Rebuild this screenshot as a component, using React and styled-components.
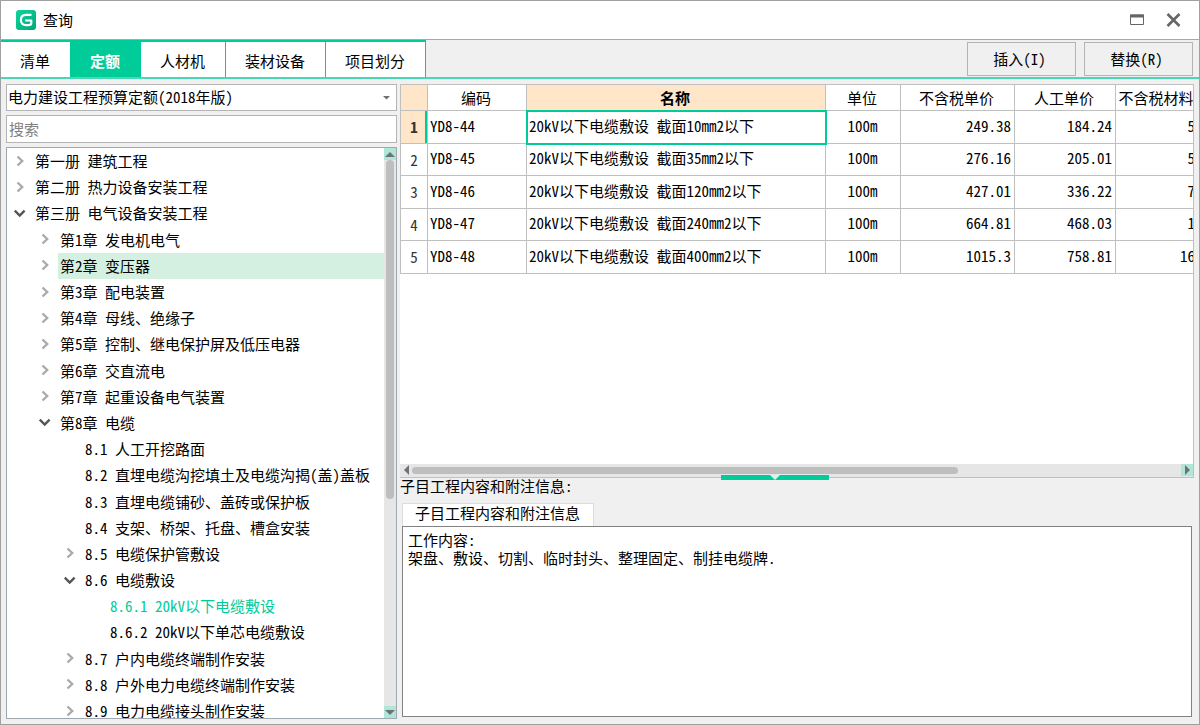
import React, { useState } from 'react';
import styled, { createGlobalStyle, css } from 'styled-components';

const green = '#00cc99';
const line = '#c0c0c0';
const peach = '#ffe6c8';
const font = '"Noto Sans Mono CJK SC", "Noto Sans CJK SC", "Liberation Sans", sans-serif';

const GlobalStyle = createGlobalStyle`
  * { box-sizing: border-box; }
  html, body, #root { height: 100%; }
  body {
    margin: 0;
    color: #000;
    font: 15px/18px ${font};
  }
  button, input, select, textarea {
    color: inherit;
    font: inherit;
    border-radius: 0;
  }
`;

const Window = styled.div`
  display: flex;
  flex-direction: column;
  height: 100%;
  min-height: 500px;
  background: #f0f0f0;
  border: 1px solid #a0a0a0;
  overflow: hidden;
`;

const TitleBar = styled.header`
  display: flex;
  align-items: center;
  gap: 7px;
  height: 39px;
  flex: none;
  padding: 0 18px 0 15px;
  background: #fff;
  border-bottom: 1px solid #a8a8a8;
`;

const Title = styled.h1`
  flex: 1;
  margin: 0;
  font-size: 15px;
  font-weight: 400;
`;

const WindowButton = styled.button`
  display: flex;
  padding: 0;
  margin-left: 15px;
  border: none;
  background: none;
`;

const Toolbar = styled.div`
  display: flex;
  align-items: center;
  justify-content: space-between;
  height: 39px;
  flex: none;
  padding-right: 6px;
  border-bottom: 2px solid #4bd7b4;
`;

const Tabs = styled.nav`
  display: flex;
  height: 37px;
`;

const Tab = styled.button`
  padding: 2px 20px 0 19px;
  border: solid ${green};
  border-width: 2px 1px 0 0;
  background: #fff;

  ${(props) =>
    props.$active &&
    css`
      background: ${green};
      color: #fff;
      font-weight: 700;
    `}
`;

const Actions = styled.div`
  display: flex;
  gap: 8px;
`;

const ActionButton = styled.button`
  width: 109px;
  height: 34px;
  padding: 0 4px 0 0;
  border: 1px solid #b4b4b4;
  background: #f0f0f0;
`;

const Body = styled.main`
  display: flex;
  flex: 1;
  gap: 3px;
  min-height: 0;
  padding: 5px;
`;

const Side = styled.section`
  display: flex;
  flex-direction: column;
  gap: 4px;
  width: 391px;
  flex: none;
`;

const SelectBox = styled.div`
  display: grid;
  align-items: center;
  height: 27px;
  border: 1px solid #b4b4b4;
  background: #fff;

  > * { grid-area: 1 / 1; }
  > svg { justify-self: end; margin-right: 6px; pointer-events: none; }
`;

const Select = styled.select`
  width: 100%;
  height: 25px;
  padding: 0 2px 2px 1px;
  border: none;
  appearance: none;
  background: none;
`;

const Search = styled.input`
  height: 28px;
  padding: 0 2px 2px;
  border: 1px solid #b4b4b4;
  background: #fff;

  &::placeholder { color: #808080; opacity: 1; }
`;

const TreeBox = styled.div`
  display: flex;
  flex: 1;
  min-height: 0;
  border: 1px solid #a0a8b0;
  background: #fff;
  overflow: hidden;
`;

const Tree = styled.ul`
  display: flex;
  flex-direction: column;
  flex: 1;
  height: calc(100% + 6px);
  margin: 0;
  padding: 0;
  list-style: none;
`;

const Node = styled.li`
  display: flex;
  flex: 1 0 26px;
  align-items: center;
  padding-left: ${(props) => props.$level * 25 + 6}px;
  white-space: nowrap;
  color: ${(props) => (props.$current ? green : '#000')};

  > svg { flex: none; }
`;

const NodeText = styled.span`
  display: flex;
  flex: 1;
  align-items: center;
  align-self: stretch;
  margin-left: 7px;
  padding-left: 2px;
  background: ${(props) => (props.$hover ? '#d4f0e1' : 'none')};
`;

const NoArrow = styled.span`
  width: 13px;
`;

const VScroll = styled.div`
  display: flex;
  flex-direction: column;
  width: 12px;
  background: #e6e6e6;
`;

const VTrack = styled.div`
  flex: 1;
  padding: 0 2px;
`;

const VThumb = styled.div`
  height: 62%;
  border-radius: 4px;
  background: #bebebe;
`;

const ScrollButton = styled.button`
  display: flex;
  align-items: center;
  justify-content: center;
  width: 12px;
  height: 12px;
  flex: none;
  padding: 0;
  border: none;
  background: ${(props) => (props.$plain ? 'none' : '#b0e6d8')};
`;

const Content = styled.section`
  display: flex;
  flex-direction: column;
  flex: 1;
  min-width: 0;
`;

const GridBox = styled.div`
  display: flex;
  flex-direction: column;
  flex: 1;
  min-height: 200px;
  border: solid ${line};
  border-width: 1px 1px 1px 0;
  background: #fff;
`;

const TableWrap = styled.div`
  flex: 1;
  overflow: hidden;
`;

const Table = styled.table`
  width: 829px;
  table-layout: fixed;
  border-collapse: separate;
  border-spacing: 0;
  border-left: 1px solid ${line};

  tbody tr { height: 32px; }
  tbody tr:nth-child(odd) { height: 33px; }
`;

const Th = styled.th`
  height: 26px;
  padding: 0 2px 0 0;
  border: solid ${line};
  border-width: 0 1px 1px 0;
  background: ${(props) => (props.$active ? peach : '#fff')};
  font-weight: ${(props) => (props.$active ? 700 : 400)};
  white-space: nowrap;
`;

const RowHead = styled.th`
  padding: 0;
  border: solid ${line};
  border-width: 0 1px 1px 0;
  background: ${(props) => (props.$active ? peach : '#fff')};
  box-shadow: ${(props) => (props.$active ? `inset -2px 0 ${green}` : 'none')};
  font-weight: ${(props) => (props.$active ? 700 : 400)};
  color: #333;
`;

const Td = styled.td`
  padding: 0 3px 3px 2px;
  border: solid ${line};
  border-width: 0 1px 1px 0;
  text-align: ${(props) => props.$align || 'left'};
  white-space: nowrap;
  outline: ${(props) => (props.$focus ? `2px solid ${green}` : 'none')};
  outline-offset: -1px;
`;

const HScroll = styled.div`
  display: flex;
  height: 13px;
  flex: none;
  background: #e6e6e6;
`;

const HTrack = styled.div`
  flex: 1;
  padding: 3px 0;
`;

const HThumb = styled.div`
  width: 71%;
  height: 7px;
  border-radius: 4px;
  background: #bebebe;
`;

const Detail = styled.section`
  position: relative;
  display: flex;
  flex-direction: column;
  height: 241px;
  flex: none;
`;

const Splitter = styled.button`
  position: absolute;
  top: -3px;
  left: 321px;
  display: flex;
  justify-content: center;
  width: 108px;
  height: 5px;
  padding: 0;
  border: none;
  background: ${green};
`;

const DetailLabel = styled.label`
  height: 25px;
  line-height: 16px;
`;

const DetailTabs = styled.div`
  display: flex;
  margin: 0 2px;
`;

const DetailTab = styled.button`
  height: 23px;
  padding: 0 13px 4px 12px;
  border: 1px solid #dcdcdc;
  border-bottom: none;
  background: #fff;
`;

const Note = styled.textarea`
  flex: 1;
  margin: 0 2px 2px;
  padding: 4px 5px;
  border: 1px solid #828282;
  background: #fff;
  outline: none;
  resize: none;
`;

const Logo = () => (
  <svg width='20' height='20' viewBox='0 0 20 20' aria-hidden='true'>
    <defs>
      <linearGradient id='logo' x1='0' y1='0' x2='1' y2='1'>
        <stop offset='0' stopColor='#10d49c' />
        <stop offset='1' stopColor='#00a878' />
      </linearGradient>
    </defs>
    <rect width='20' height='20' rx='3' fill='url(#logo)' />
    <path
      d='M15.500 4.800H10C6.800 4.800 4.900 7 4.900 10s1.900 5.200 5 5.200h2.500c1.900 0 2.900-1 2.900-2.500V10.500H9.200'
      fill='none'
      stroke='#fff'
      strokeWidth='2.2'
      strokeLinejoin='round'
    />
  </svg>
);

const Arrow = ({ open }) => (
  <svg width='13' height='13' viewBox='0 0 13 13' aria-hidden='true'>
    <path
      d={open ? 'M1.800 3.600 6.700 8.500 11.600 3.600' : 'M4.500 1.500 9.200 6 4.500 10.500'}
      fill='none'
      stroke={open ? '#555' : '#aaa'}
      strokeWidth='2.400'
    />
  </svg>
);

const triangles = {
  up: 'M0 8 5 3 10 8Z',
  down: 'M0 3 5 8 10 3Z',
  left: 'M8 0 3 5 8 10Z',
  right: 'M3 0 8 5 3 10Z',
};

const Triangle = ({ to, size = 10 }) => (
  <svg width={size} height={size} viewBox='0 0 10 10' aria-hidden='true'>
    <path d={triangles[to]} fill='#707078' />
  </svg>
);

const tabs = ['清单', '定额', '人材机', '装材设备', '项目划分'];

// arrow: 'open', 'closed' or nothing for a leaf
const nodes = [
  { level: 0, arrow: 'closed', text: '第一册 建筑工程' },
  { level: 0, arrow: 'closed', text: '第二册 热力设备安装工程' },
  { level: 0, arrow: 'open', text: '第三册 电气设备安装工程' },
  { level: 1, arrow: 'closed', text: '第1章 发电机电气' },
  { level: 1, arrow: 'closed', text: '第2章 变压器', hover: true },
  { level: 1, arrow: 'closed', text: '第3章 配电装置' },
  { level: 1, arrow: 'closed', text: '第4章 母线、绝缘子' },
  { level: 1, arrow: 'closed', text: '第5章 控制、继电保护屏及低压电器' },
  { level: 1, arrow: 'closed', text: '第6章 交直流电' },
  { level: 1, arrow: 'closed', text: '第7章 起重设备电气装置' },
  { level: 1, arrow: 'open', text: '第8章 电缆' },
  { level: 2, text: '8.1 人工开挖路面' },
  { level: 2, text: '8.2 直埋电缆沟挖填土及电缆沟揭(盖)盖板' },
  { level: 2, text: '8.3 直埋电缆铺砂、盖砖或保护板' },
  { level: 2, text: '8.4 支架、桥架、托盘、槽盒安装' },
  { level: 2, arrow: 'closed', text: '8.5 电缆保护管敷设' },
  { level: 2, arrow: 'open', text: '8.6 电缆敷设' },
  { level: 3, text: '8.6.1 20kV以下电缆敷设', current: true },
  { level: 3, text: '8.6.2 20kV以下单芯电缆敷设' },
  { level: 2, arrow: 'closed', text: '8.7 户内电缆终端制作安装' },
  { level: 2, arrow: 'closed', text: '8.8 户外电力电缆终端制作安装' },
  { level: 2, arrow: 'closed', text: '8.9 电力电缆接头制作安装' },
];

const columns = [
  { title: '编码', width: 99 },
  { title: '名称', width: 299, active: true },
  { title: '单位', width: 75 },
  { title: '不含税单价', width: 114 },
  { title: '人工单价', width: 101 },
  { title: '不含税材料单价', width: 113 },
];

const rows = [
  ['YD8-44', '20kV以下电缆敷设 截面10mm2以下', '100m', '249.38', '184.24', '50.14'],
  ['YD8-45', '20kV以下电缆敷设 截面35mm2以下', '100m', '276.16', '205.01', '56.15'],
  ['YD8-46', '20kV以下电缆敷设 截面120mm2以下', '100m', '427.01', '336.22', '75.79'],
  ['YD8-47', '20kV以下电缆敷设 截面240mm2以下', '100m', '664.81', '468.03', '181.7'],
  ['YD8-48', '20kV以下电缆敷设 截面400mm2以下', '100m', '1015.3', '758.81', '168.49'],
];

const aligns = ['left', 'left', 'center', 'right', 'right', 'right'];

export default function App() {
  const [activeTab, setActiveTab] = useState('定额');

  return (
    <Window>
      <GlobalStyle />
      <TitleBar>
        <Logo />
        <Title>查询</Title>
        <WindowButton aria-label='最大化'>
          <svg width='14' height='12' viewBox='0 0 14 12'>
            <path d='M.5 1h13v9.500H.5Z' fill='#fff' stroke='#666' />
            <path d='M0 .5h14v3H0Z' fill='#666' />
          </svg>
        </WindowButton>
        <WindowButton aria-label='关闭'>
          <svg width='15' height='14' viewBox='0 0 15 14'>
            <path d='M1.500 1 13.500 13M13.500 1 1.500 13' stroke='#666' strokeWidth='2.600' />
          </svg>
        </WindowButton>
      </TitleBar>

      <Toolbar>
        <Tabs>
          {tabs.map((tab) => (
            <Tab key={tab} $active={tab === activeTab} onClick={() => setActiveTab(tab)}>
              {tab}
            </Tab>
          ))}
        </Tabs>
        <Actions>
          <ActionButton>插入(I)</ActionButton>
          <ActionButton>替换(R)</ActionButton>
        </Actions>
      </Toolbar>

      <Body>
        <Side>
          <SelectBox>
            <Select aria-label='定额库'>
              <option>电力建设工程预算定额(2018年版)</option>
            </Select>
            <Triangle to='down' size={7} />
          </SelectBox>
          <Search aria-label='搜索' placeholder='搜索' />
          <TreeBox>
            <Tree role='tree'>
              {nodes.map((node) => (
                <Node
                  key={node.text}
                  role='treeitem'
                  $level={node.level}
                  $current={node.current}
                >
                  {node.arrow ? <Arrow open={node.arrow === 'open'} /> : <NoArrow />}
                  <NodeText $hover={node.hover}>{node.text}</NodeText>
                </Node>
              ))}
            </Tree>
            <VScroll>
              <ScrollButton aria-label='向上'>
                <Triangle to='up' />
              </ScrollButton>
              <VTrack>
                <VThumb />
              </VTrack>
              <ScrollButton aria-label='向下'>
                <Triangle to='down' />
              </ScrollButton>
            </VScroll>
          </TreeBox>
        </Side>

        <Content>
          <GridBox>
            <TableWrap>
              <Table>
                <colgroup>
                  <col width='27' />
                  {columns.map((col) => (
                    <col key={col.title} width={col.width} />
                  ))}
                </colgroup>
                <thead>
                  <tr>
                    <Th $active />
                    {columns.map((col) => (
                      <Th key={col.title} $active={col.active}>
                        {col.title}
                      </Th>
                    ))}
                  </tr>
                </thead>
                <tbody>
                  {rows.map((row, index) => (
                    <tr key={row[0]}>
                      <RowHead $active={index === 0}>{index + 1}</RowHead>
                      {row.map((value, i) => (
                        <Td key={i} $align={aligns[i]} $focus={index === 0 && i === 1}>
                          {value}
                        </Td>
                      ))}
                    </tr>
                  ))}
                </tbody>
              </Table>
            </TableWrap>
            <HScroll>
              <ScrollButton $plain aria-label='向左'>
                <Triangle to='left' />
              </ScrollButton>
              <HTrack>
                <HThumb />
              </HTrack>
              <ScrollButton aria-label='向右'>
                <Triangle to='right' />
              </ScrollButton>
            </HScroll>
          </GridBox>

          <Detail>
            <Splitter aria-label='收起'>
              <svg width='12' height='5' viewBox='0 0 12 5'>
                <path d='M1 0h10L6 5Z' fill='#d4f5ea' />
              </svg>
            </Splitter>
            <DetailLabel htmlFor='note'>子目工程内容和附注信息:</DetailLabel>
            <DetailTabs>
              <DetailTab>子目工程内容和附注信息</DetailTab>
            </DetailTabs>
            <Note
              id='note'
              readOnly
              value={'工作内容:\n架盘、敷设、切割、临时封头、整理固定、制挂电缆牌.'}
            />
          </Detail>
        </Content>
      </Body>
    </Window>
  );
}
